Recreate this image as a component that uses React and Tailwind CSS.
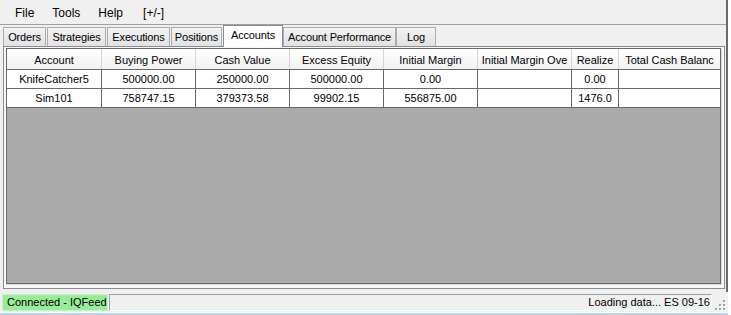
export default function App() {
  const font = { fontFamily: '"Liberation Sans", Arial, sans-serif' };
  const cols = [
    { h: 'Account', w: 95 },
    { h: 'Buying Power', w: 94 },
    { h: 'Cash Value', w: 94 },
    { h: 'Excess Equity', w: 94 },
    { h: 'Initial Margin', w: 94 },
    { h: 'Initial Margin Ove', w: 94 },
    { h: 'Realize', w: 47 },
    { h: 'Total Cash Balanc', w: 101 },
  ];
  const rows = [
    ['KnifeCatcher5', '500000.00', '250000.00', '500000.00', '0.00', '', '0.00', ''],
    ['Sim101', '758747.15', '379373.58', '99902.15', '556875.00', '', '1476.0', ''],
  ];
  const tabs = [
    { t: 'Orders', w: 43, ml: 3 },
    { t: 'Strategies', w: 59, ml: 1 },
    { t: 'Executions', w: 63, ml: 1 },
    { t: 'Positions', w: 51, ml: 1 },
    { t: 'Accounts', w: 60, ml: 1, active: true },
    { t: 'Account Performance', w: 113, ml: 0 },
    { t: 'Log', w: 40, ml: 0 },
  ];
  return (
    <div className="w-[731px] h-[315px] bg-[#f0f0f0] flex overflow-hidden text-black" style={font}>
      <div className="w-[728px] flex flex-col">
        <div className="h-[292px] border-r-2 border-[#6b6b6b] flex flex-col">
          {/* menu */}
          <div className="h-[25px] flex items-center text-[12px] border-b border-[#a0a0a0] pt-[1px]">
            <span className="ml-[15px]">File</span>
            <span className="ml-[18px]">Tools</span>
            <span className="ml-[18px]">Help</span>
            <span className="ml-[20px]">[+/-]</span>
          </div>
          {/* tabs */}
          <div className="h-[21px] flex items-end text-[11px] tracking-[-0.15px] relative z-10">
            {tabs.map((tb) =>
              tb.active ? (
                <div
                  key={tb.t}
                  className="relative top-[1px] h-[22px] bg-white border border-b-0 border-[#898c95] flex items-center justify-center pb-[2px]"
                  style={{ width: tb.w, marginLeft: tb.ml }}
                >
                  {tb.t}
                </div>
              ) : (
                <div
                  key={tb.t}
                  className="h-[19px] bg-gradient-to-b from-[#f3f3f3] to-[#e2e2e2] border border-b-0 border-[#acacac] flex items-center justify-center"
                  style={{ width: tb.w, marginLeft: tb.ml }}
                >
                  {tb.t}
                </div>
              )
            )}
          </div>
          {/* panel */}
          <div className="ml-[3px] w-[722px] h-[243px] border border-[#898c95] bg-[#f7f7f7] pt-[1px] pl-[2px] pr-[3px]">
            <div className="w-[715px] h-[236px] border border-[#696969] bg-[#ababab] shadow-[1px_1px_0_#dadada]">
              <div className="flex text-[11px] h-[21px] bg-gradient-to-b from-white to-[#f1f1f1] border-b border-[#696969]">
                {cols.map((c, i) => (
                  <div
                    key={i}
                    className={`h-full flex items-center justify-center pt-[2px] whitespace-nowrap overflow-hidden ${i < cols.length - 1 ? 'border-r border-[#d5d5d5]' : ''}`}
                    style={{ width: c.w }}
                  >
                    {c.h}
                  </div>
                ))}
              </div>
              {rows.map((r, ri) => (
                <div key={ri} className="flex text-[11px] h-[19px] bg-white border-b border-[#696969]" style={{ width: 713 }}>
                  {r.map((v, i) => (
                    <div
                      key={i}
                      className={`h-full flex items-center justify-center whitespace-nowrap overflow-hidden ${i < r.length - 1 ? 'border-r border-[#696969]' : ''}`}
                      style={{ width: cols[i].w }}
                    >
                      {v}
                    </div>
                  ))}
                </div>
              ))}
            </div>
          </div>
        </div>
        {/* status bar */}
        <div className="h-[20px] flex items-center text-[11px] pl-[2px] pt-[1px]">
          <div className="w-[106px] h-[17px] bg-[#98ec98] border border-[#c4f3c4] flex items-center pl-[4px] whitespace-nowrap overflow-hidden">
            Connected - IQFeed
          </div>
          <div className="ml-[1px] w-[603px] h-[17px] border-t border-l border-[#a0a0a0] border-b border-r border-b-white border-r-white flex items-center justify-end pr-[1px] whitespace-nowrap">
            Loading data... ES 09-16
          </div>
          <svg width="12" height="12" viewBox="0 0 12 12" className="ml-[2px] mt-[4px]">
            {[[9, 1], [9, 5], [9, 9], [5, 5], [5, 9], [1, 9]].map(([x, y], k) => (
              <g key={k}>
                <rect x={x + 1} y={y + 1} width="2" height="2" fill="#ffffff" />
                <rect x={x} y={y} width="2" height="2" fill="#a0a0a0" />
              </g>
            ))}
          </svg>
        </div>
        <div className="h-[3px] border-t border-white bg-[#bcd3ee]" />
      </div>
      <div className="w-[3px] bg-white" />
    </div>
  );
}
